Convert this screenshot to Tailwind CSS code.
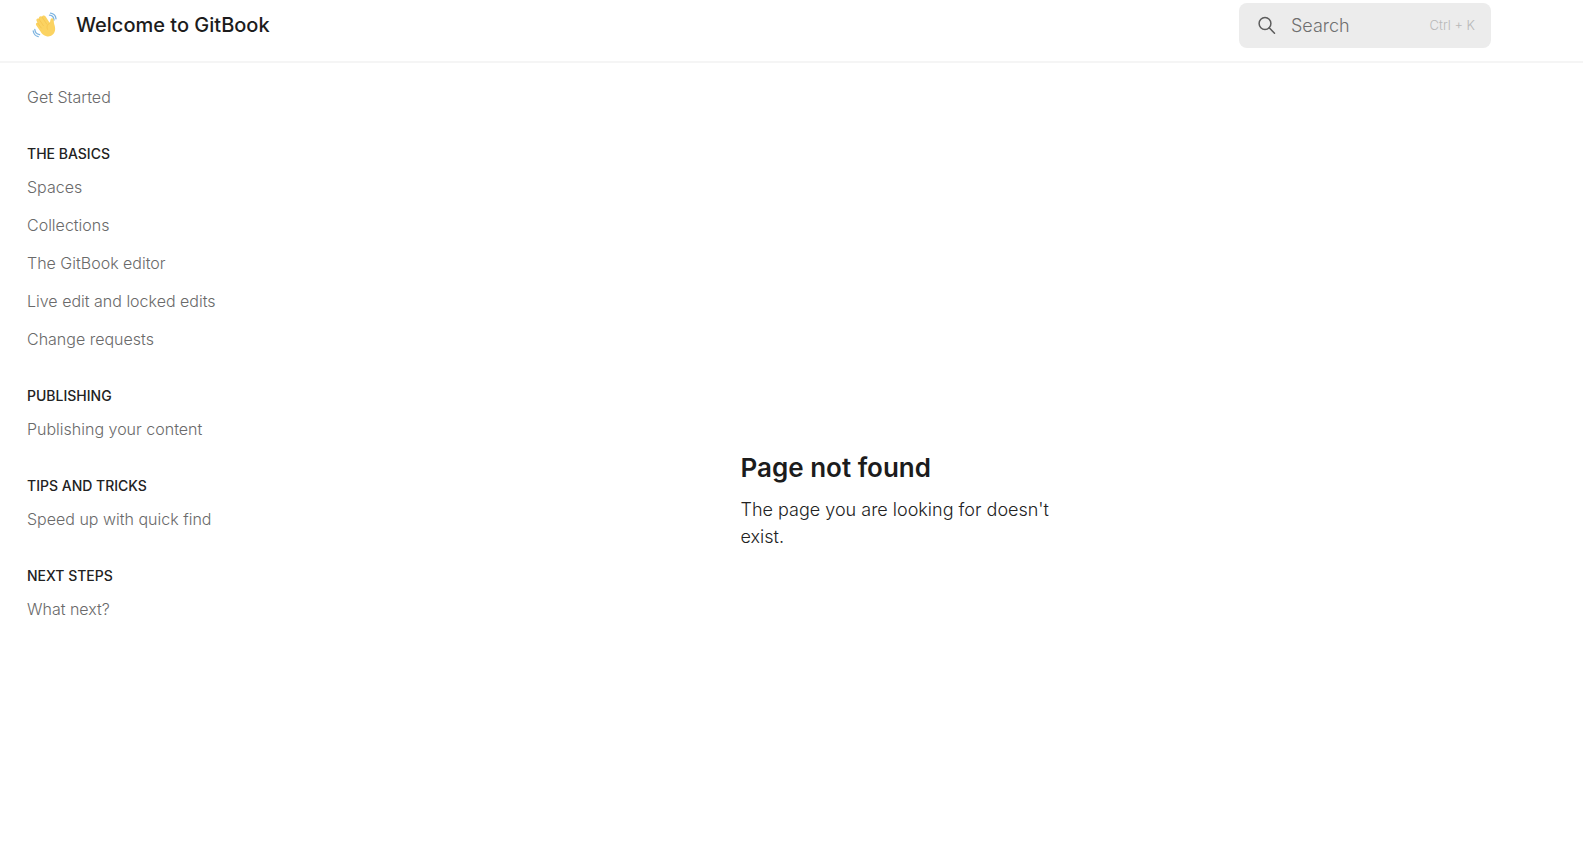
<!DOCTYPE html>
<html lang="en">
<head>
<meta charset="utf-8">
<meta name="viewport" content="width=device-width, initial-scale=1">
<title>Welcome to GitBook</title>
<script src="https://cdn.jsdelivr.net/npm/@tailwindcss/browser@4"></script>
</head>
<body class="flex min-h-screen flex-col bg-white font-['Inter',sans-serif] text-[#1c1c1c]">
<header class="flex items-start justify-between border-b-2 border-[#f5f5f5] pt-[3px] pr-[92px] pb-[13px] pl-8">
  <a href="#" class="flex h-11 items-center gap-[18px] text-xl font-medium">
    <svg class="size-[26px]" viewBox="0 0 26 26" aria-hidden="true">
      <g fill="none" stroke="#7db4e0" stroke-width="1.3" stroke-linecap="round">
        <path d="M17.500 3.200c2.500.200 4.300 2 4.500 4.800M18.500 1.200c3.200.400 5.200 2.500 5.500 5.600"/>
        <path d="M2.800 17.500c.300 2.800 2 4.700 4.800 5.200M1.200 19c.500 3 2.300 5 5 5.600"/>
      </g>
      <path fill="#fbd362" d="M4.200 13.300c-.900-1.700.500-3 1.500-2.300L4.600 8.900C3.700 7.100 5.600 5.700 6.900 7 6.500 4.800 8.400 3.300 9.900 4.800 10.700 2.900 12.700 3 13.600 4.600l4.200 6.300c.700-1.700.300-3.900 1.800-4.600 1.600-.600 2.300.900 2.200 2.600-.100 3.300 2 5.600 1.200 9.700-.800 4.400-4.600 6.500-8.500 5.700-2.900-.600-4.600-2.500-6-4.800z"/>
      <path fill="none" stroke="#f1bd48" stroke-width=".6" stroke-linecap="round" d="M6.900 7l4.500 6.700M9.900 4.800l4.900 7.400M5.700 11l3.600 5M17.800 10.900c-2.600 1.500-3.500 3.800-2.300 6.400"/>
    </svg>
    <span>Welcome to GitBook</span>
  </a>
  <button type="button" class="flex h-[45px] w-[252px] items-center rounded-lg bg-[#ececec] pr-4 pl-[18px] text-lg font-light text-[#6f6f6f]">
    <svg class="mr-[14px] size-5" viewBox="0 0 20 20" fill="none" stroke="#5c5c5c" stroke-width="1.5" stroke-linecap="round" aria-hidden="true">
      <circle cx="8" cy="7.500" r="5.900"/>
      <path d="M12.200 11.800l5.300 5.500"/>
    </svg>
    <span>Search</span>
    <span class="ml-auto text-[13px] text-[#b8b8b8]">Ctrl + K</span>
  </button>
</header>
<div class="flex flex-1">
  <nav aria-label="Pages" class="flex w-[300px] shrink-0 flex-col gap-6 pt-[15px] pl-[27px] text-base font-light text-[#6a6a6a]">
    <ul>
      <li><a href="#" class="flex h-[38px] items-center">Get Started</a></li>
    </ul>
    <section>
      <h2 class="flex h-7 items-center text-sm font-medium text-[#222]">THE BASICS</h2>
      <ul>
        <li><a href="#" class="flex h-[38px] items-center">Spaces</a></li>
        <li><a href="#" class="flex h-[38px] items-center">Collections</a></li>
        <li><a href="#" class="flex h-[38px] items-center">The GitBook editor</a></li>
        <li><a href="#" class="flex h-[38px] items-center">Live edit and locked edits</a></li>
        <li><a href="#" class="flex h-[38px] items-center">Change requests</a></li>
      </ul>
    </section>
    <section>
      <h2 class="flex h-7 items-center text-sm font-medium text-[#222]">PUBLISHING</h2>
      <ul>
        <li><a href="#" class="flex h-[38px] items-center">Publishing your content</a></li>
      </ul>
    </section>
    <section>
      <h2 class="flex h-7 items-center text-sm font-medium text-[#222]">TIPS AND TRICKS</h2>
      <ul>
        <li><a href="#" class="flex h-[38px] items-center">Speed up with quick find</a></li>
      </ul>
    </section>
    <section>
      <h2 class="flex h-7 items-center text-sm font-medium text-[#222]">NEXT STEPS</h2>
      <ul>
        <li><a href="#" class="flex h-[38px] items-center">What next?</a></li>
      </ul>
    </section>
  </nav>
  <main class="flex flex-1 items-center justify-center pt-[84px] pr-[82px]">
    <div class="w-80">
      <h1 class="text-[26px] leading-10 font-semibold">Page not found</h1>
      <p class="mt-2 text-lg leading-[27px] font-light text-[#222]">The page you are looking for doesn't exist.</p>
    </div>
  </main>
</div>
</body>
</html>
